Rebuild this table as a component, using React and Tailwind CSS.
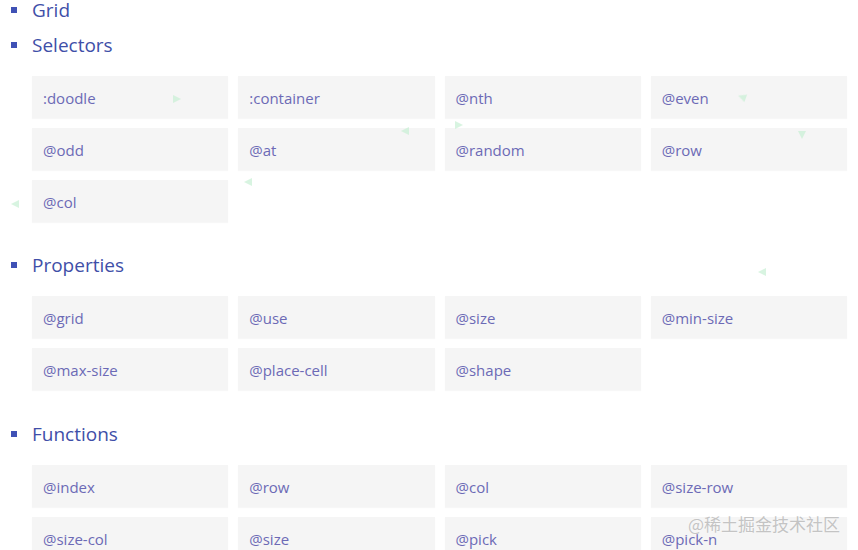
const sections = [
  { title: 'Grid', items: [] },
  {
    title: 'Selectors',
    items: [':doodle', ':container', '@nth', '@even', '@odd', '@at', '@random', '@row', '@col'],
  },
  {
    title: 'Properties',
    items: ['@grid', '@use', '@size', '@min-size', '@max-size', '@place-cell', '@shape'],
  },
  {
    title: 'Functions',
    items: ['@index', '@row', '@col', '@size-row', '@size-col', '@size', '@pick', '@pick-n'],
  },
];

// faint decorative triangles scattered over the page
const triangles = [
  { x: 172, y: 94, r: 0 },
  { x: 400, y: 126, r: 180 },
  { x: 454, y: 120, r: 0 },
  { x: 243, y: 177, r: 180 },
  { x: 10, y: 199, r: 180 },
  { x: 737, y: 92, r: 200 },
  { x: 797, y: 130, r: 90 },
  { x: 757, y: 267, r: 180 },
];

function Triangle({ x, y, r }) {
  return (
    <svg
      className="absolute pointer-events-none blur-[0.5px]"
      style={{ left: x, top: y, transform: `rotate(${r}deg)` }}
      width="10"
      height="10"
      viewBox="0 0 10 10"
    >
      <polygon points="1,1 9,5 1,9" fill="#c8f0d4" opacity="0.7" />
    </svg>
  );
}

export default function App() {
  return (
    <div className="relative w-[858px] h-[550px] overflow-hidden bg-white font-['Open_Sans','Noto_Sans',sans-serif]">
      <ul className="-mt-[8px]">
        {sections.map((s, idx) => (
          <li
            key={s.title}
            className={s.items.length ? (idx === 2 ? 'mb-[26px]' : 'mb-[25px]') : '-mb-px'}
          >
            <div className="flex items-center h-9 text-[19px] text-[#3f4fa8]">
              <span className="ml-[11px] mr-[15px] w-[6px] h-[6px] bg-[#3f51b5]" />
              {s.title}
            </div>
            {s.items.length > 0 && (
              <div className="mt-[13px] ml-[32px] w-[815px] grid grid-cols-4 gap-[10px]">
                {s.items.map((it, i) => (
                  <div
                    key={i}
                    className="h-[42px] flex items-center pl-[11px] pt-[2px] bg-[#f5f5f5] shadow-[0_1px_1px_rgba(0,0,0,0.03)] text-[15px] text-[#6c6ab6]"
                  >
                    {it}
                  </div>
                ))}
              </div>
            )}
          </li>
        ))}
      </ul>
      {triangles.map((t, i) => (
        <Triangle key={i} {...t} />
      ))}
      <div className="absolute right-[18px] top-[511px] text-[17px] text-[#c4c4c4] font-['Noto_Sans_CJK_SC',sans-serif] [text-shadow:0_0_2px_rgba(255,255,255,0.9)]">
        @稀土掘金技术社区
      </div>
    </div>
  );
}
